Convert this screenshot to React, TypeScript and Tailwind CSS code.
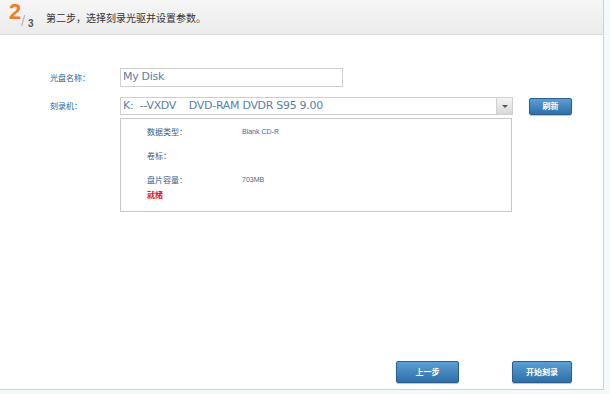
import React from 'react'

const cjk = { fontFamily: '"Noto Sans CJK SC", "Noto Sans", sans-serif' }

function BlueButton({ label, className }: { label: string; className: string }) {
  return (
    <button
      className={`flex items-center justify-center rounded-[2px] border border-[#2a5f8f] bg-gradient-to-b from-[#5a9fd4] to-[#2f6fa8] text-white font-bold shadow-[0_1px_1px_rgba(0,0,0,0.25)] ${className}`}
      style={cjk}
    >
      {label}
    </button>
  )
}

function InfoRow({ label, value }: { label: string; value?: string }) {
  return (
    <div className="flex h-[24px] items-center text-[8px] text-[#2d5f91]">
      <span className="w-[95px]" style={cjk}>{label}</span>
      <span className="font-['Liberation_Sans'] text-[7px] text-[#3a6a9a]">{value}</span>
    </div>
  )
}

export default function App() {
  return (
    <main className="w-[610px] h-[394px] bg-[#f4f9fb] overflow-hidden">
      <div className="flex h-[390px] w-[604px] flex-col border-r border-b border-[#c9d2d8] bg-white">
        <header className="flex h-[35px] shrink-0 items-center border-b border-[#dadada] bg-gradient-to-b from-[#f6f6f6] to-[#ececec]">
          <div className="relative ml-[8px] h-[30px] w-[26px]">
            <span className="absolute left-[1px] top-[-1px] font-['Liberation_Sans'] text-[22px] font-bold leading-none text-[#ee7d22]">2</span>
            <span className="absolute left-[13px] top-[11px] font-['Liberation_Sans'] text-[15px] leading-none text-[#b5b5b5]">/</span>
            <span className="absolute left-[20px] top-[17px] font-['Liberation_Sans'] text-[10px] font-bold leading-none text-[#555]">3</span>
          </div>
          <p className="ml-[12px] text-[10px] text-[#333]" style={cjk}>第二步，选择刻录光驱并设置参数。</p>
        </header>

        <section className="flex flex-col pl-[50px] pt-[33px]">
          <div className="flex items-center">
            <span className="w-[70px] text-[8px] text-[#2d5f91]" style={cjk}>光盘名称：</span>
            <div className="flex h-[19px] w-[223px] items-center border border-[#cfcfcf] px-[2px] font-['DejaVu_Sans'] text-[11px] tracking-[-0.3px] text-[#5a7fa6]">
              My Disk
            </div>
          </div>

          <div className="mt-[10px] flex items-center">
            <span className="w-[70px] text-[8px] text-[#2d5f91]" style={cjk}>刻录机：</span>
            <div className="flex h-[18px] w-[393px] items-center justify-between border border-[#cfcfcf]">
              <span className="whitespace-pre pl-[2px] font-['DejaVu_Sans'] text-[11px] tracking-[-0.3px] text-[#5a7fa6]">K:  --VXDV    DVD-RAM DVDR S95 9.00</span>
              <span className="flex h-[16px] w-[16px] items-center justify-center border-l border-[#d0d0d0] bg-gradient-to-b from-[#f5f5f5] to-[#d8d8d8]">
                <span className="h-0 w-0 border-x-[3px] border-t-[3px] border-x-transparent border-t-[#555]" />
              </span>
            </div>
            <BlueButton label="刷新" className="ml-[16px] h-[17px] w-[43px] text-[8px]" />
          </div>

          <div className="ml-[70px] mt-[3px] flex h-[94px] w-[392px] flex-col border border-[#c8c8c8] pl-[26px] pt-[1px] shadow-[inset_0_0_1px_rgba(0,0,0,0.1)]">
            <InfoRow label="数据类型：" value="Blank CD-R" />
            <InfoRow label="卷标：" />
            <InfoRow label="盘片容量：" value="703MB" />
            <span className="mt-[-3px] text-[8px] font-bold text-[#e01010]" style={cjk}>就绪</span>
          </div>
        </section>

        <div className="flex-1" />

        <footer className="flex justify-end gap-[53px] pb-[6px] pr-[31px]">
          <BlueButton label="上一步" className="h-[22px] w-[63px] text-[8px]" />
          <BlueButton label="开始刻录" className="h-[22px] w-[60px] text-[8px]" />
        </footer>
      </div>
    </main>
  )
}
